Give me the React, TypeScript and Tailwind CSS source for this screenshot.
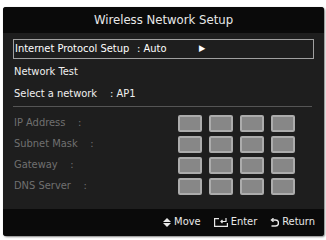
const font = { fontFamily: '"Liberation Sans Narrow", "DejaVu Sans Condensed", "Liberation Sans", sans-serif' };

const fields = ["IP Address    :", "Subnet Mask    :", "Gateway    :", "DNS Server    :"];

function Box() {
  return <div className="h-[17px] w-[24px] rounded-[2px] border-2 border-[#acacac] bg-[#878787]" />;
}

export default function App() {
  return (
    <div className="h-[240px] w-[326px] bg-white pl-[3px] pr-[2px] pt-[7px] pb-[4px]" style={font}>
      <div className="flex h-full flex-col overflow-hidden rounded-[3px] bg-[#1e1e1e] shadow-[1px_1px_2px_rgba(0,0,0,0.5)]">
        <div className="flex h-[26px] items-center justify-center bg-[#0a0a0a] text-[13px] text-[#e8e8e8]">
          Wireless Network Setup
        </div>
        <div className="flex-1 px-[10px] pt-[6px]">
          <div className="flex h-[20px] items-center border border-[#a0a0a0] px-[1px] text-[11px] text-white">
            <span className="w-[122px]">Internet Protocol Setup</span>
            <span className="w-[62px]">: Auto</span>
            <span className="text-[9px]">▶</span>
          </div>
          <div className="flex h-[25px] items-center px-[1px] pt-[1px] text-[11px] text-[#f0f0f0]">Network Test</div>
          <div className="flex h-[21px] items-center px-[1px] text-[11px] text-[#f0f0f0]">
            <span className="w-[96px]">Select a network</span>
            <span>: AP1</span>
          </div>
          <div className="mt-[1px] mr-[2px] h-px bg-[#555]" />
          <div className="mt-[8px] flex">
            <div className="flex w-[165px] flex-col gap-[4px] pl-[1px] text-[11px] text-[#707070]">
              {fields.map((f) => (
                <div key={f} className="flex h-[17px] items-center whitespace-pre">{f}</div>
              ))}
            </div>
            <div className="grid grid-cols-4 gap-x-[7px] gap-y-[4px]">
              {Array.from({ length: 16 }).map((_, i) => (
                <Box key={i} />
              ))}
            </div>
          </div>
        </div>
        <div className="flex h-[27px] items-center justify-end gap-[13px] bg-[#0a0a0a] pr-[9px] text-[11px] text-[#e8e8e8]">
          <span className="flex items-center gap-[3px]">
            <svg width="8" height="9" viewBox="0 0 8 9" fill="#e8e8e8">
              <path d="M4 0 L8 4 H0 Z M0 5 H8 L4 9 Z" />
            </svg>
            Move
          </span>
          <span className="flex items-center gap-[3px]">
            <svg width="14" height="9" viewBox="0 0 14 9" fill="none" stroke="#e8e8e8" strokeWidth="1.2">
              <path d="M5 0.6 H0.6 V8.4 H13.4 V5" />
              <path d="M12 0 V3.5 H7" />
              <path d="M8.5 2 L7 3.5 L8.5 5" />
            </svg>
            Enter
          </span>
          <span className="flex items-center gap-[3px]">
            <svg width="9" height="9" viewBox="0 0 9 9" fill="none" stroke="#e8e8e8" strokeWidth="1.4">
              <path d="M2 2 H5.5 A2.7 2.7 0 0 1 5.5 8 H1.5" />
              <path d="M3.5 0.3 L1.5 2 L3.5 3.7" />
            </svg>
            Return
          </span>
        </div>
      </div>
    </div>
  );
}
